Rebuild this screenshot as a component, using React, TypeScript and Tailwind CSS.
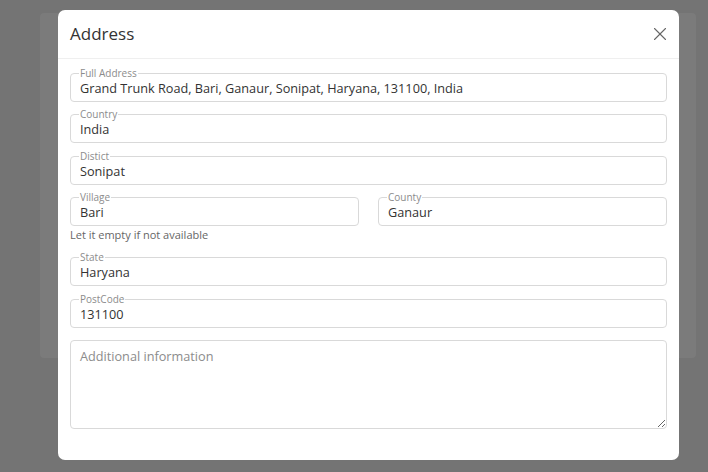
import { X } from 'lucide-react';

const FONT = { fontFamily: '"Open Sans", "Liberation Sans", sans-serif' };

function Field({ label, value }: { label: string; value: string }) {
  return (
    <fieldset className="m-0 min-w-0 border border-[#d9d9d9] rounded-[4px] px-[9px] pb-[4px]">
      <legend className="ml-[-1px] px-[1px] text-[10px] leading-[12px] text-[#8c8c8c]">{label}</legend>
      <div className="text-[12.7px] leading-[18px] text-[#333333]">{value}</div>
    </fieldset>
  );
}

export default function App() {
  return (
    <div className="relative w-[708px] h-[472px] bg-[#747474] overflow-hidden" style={FONT}>
      {/* page behind the dialog */}
      <div className="ml-[40px] mt-[13px] w-[656px] h-[345px] rounded-[4px] bg-[#7b7b7b]" />

      <div className="absolute left-[58px] top-[10px] w-[621px] h-[450px] rounded-[7px] bg-white flex flex-col">
        <div className="h-[49px] flex items-center justify-between pl-[12px] pr-[8px] border-b border-[#efefef]">
          <h2 className="text-[17px] text-[#333333]">Address</h2>
          <X size={22} strokeWidth={1.2} className="text-[#666666]" />
        </div>

        <div className="px-[12px] pt-[8px] flex flex-col">
          <Field label="Full Address" value="Grand Trunk Road, Bari, Ganaur, Sonipat, Haryana, 131100, India" />
          <div className="mt-[6px]">
            <Field label="Country" value="India" />
          </div>
          <div className="mt-[7px]">
            <Field label="Distict" value="Sonipat" />
          </div>
          <div className="mt-[6px] grid grid-cols-2 gap-[19px]">
            <Field label="Village" value="Bari" />
            <Field label="County" value="Ganaur" />
          </div>
          <p className="mt-[2px] text-[11px] leading-[14px] text-[#666666]">Let it empty if not available</p>
          <div className="mt-[9px]">
            <Field label="State" value="Haryana" />
          </div>
          <div className="mt-[7px]">
            <Field label="PostCode" value="131100" />
          </div>
          <textarea
            className="mt-[12px] h-[89px] w-full rounded-[4px] border border-[#d9d9d9] px-[9px] py-[5px] text-[12.7px] leading-[20px] text-[#333333] placeholder:text-[#8c8c8c] outline-none"
            placeholder="Additional information"
          />
        </div>
      </div>
    </div>
  );
}
